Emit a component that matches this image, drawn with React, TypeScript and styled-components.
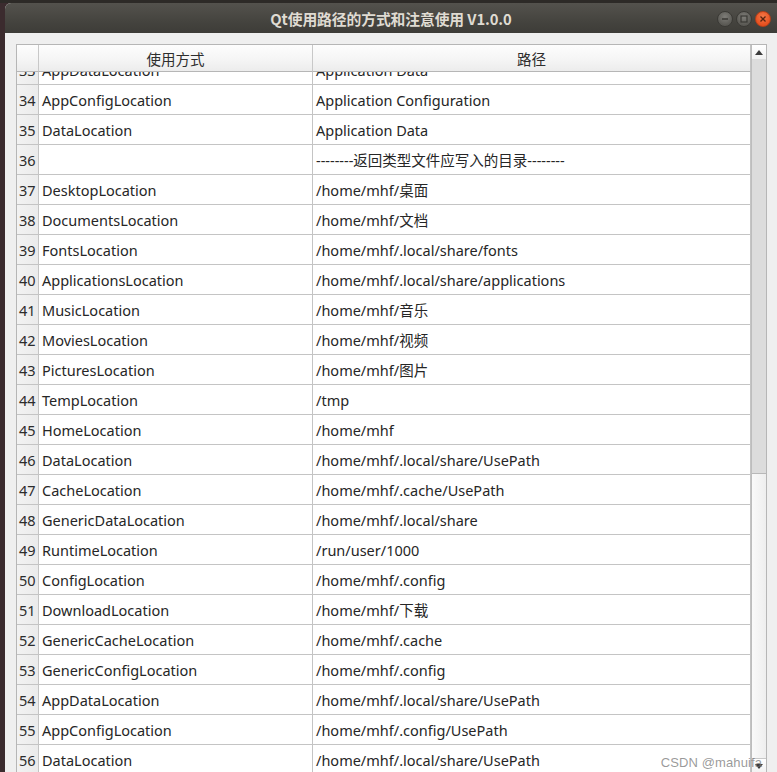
import React from 'react'
import styled, { createGlobalStyle } from 'styled-components'

const GlobalStyle = createGlobalStyle`
  html, body {
    margin: 0;
    padding: 0;
    background: #3b2b2e;
    overflow: hidden;
  }
  body {
    font-family: 'Noto Sans', 'Noto Sans CJK SC', sans-serif;
  }
`

const Desktop = styled.div`
  height: 772px;
  padding: 3px 0 0 5px;
  box-sizing: border-box;
  background: linear-gradient(#2d2a27 0, #2d2a27 3px, #3b2b2e 3px);
`

const Window = styled.div`
  height: 772px;
  background: #efefef;
  border-radius: 6px 0 0 0;
  overflow: hidden;
  display: flex;
  flex-direction: column;
`

const TitleBar = styled.div`
  height: 30px;
  flex: none;
  display: grid;
  grid-template-columns: 1fr auto 1fr;
  align-items: center;
  background: linear-gradient(#54524d, #45443f 60%, #3d3c38);
`

const Title = styled.div`
  grid-column: 2;
  color: #dfdbd2;
  font-family: 'Noto Sans CJK SC', 'Noto Sans', sans-serif;
  font-weight: 700;
  font-size: 14.8px;
  letter-spacing: -0.1px;
  padding-top: 1px;
`

const Controls = styled.div`
  grid-column: 3;
  justify-self: end;
  display: flex;
  gap: 3px;
  padding-right: 6px;
  padding-top: 2px;
`

const WinButton = styled.span<{ $close?: boolean }>`
  width: 16px;
  height: 16px;
  border-radius: 50%;
  display: flex;
  align-items: center;
  justify-content: center;
  box-sizing: border-box;
  border: 1px solid ${p => (p.$close ? '#b7401a' : '#3a3935')};
  background: ${p =>
    p.$close
      ? 'radial-gradient(circle at 50% 35%, #f47a4a, #e6501f 70%)'
      : 'radial-gradient(circle at 50% 35%, #7e7d78, #5a5954 70%)'};
`

const Body = styled.div`
  flex: 1;
  padding: 11px 10px 0 11px;
  display: flex;
  flex-direction: column;
  min-height: 0;
`

const Frame = styled.div`
  position: relative;
  height: 730px;
  flex: none;
  border: 1px solid #b6b6b6;
  display: flex;
  background: #ffffff;
  box-sizing: border-box;
`

const Viewport = styled.div`
  flex: 1;
  display: flex;
  flex-direction: column;
  min-width: 0;
`

const cols = '22px 274px 1fr'

const HeaderRow = styled.div`
  display: grid;
  grid-template-columns: ${cols};
  height: 27px;
  flex: none;
  position: relative;
  z-index: 1;
`

const HeaderCell = styled.div<{ $last?: boolean }>`
  background: linear-gradient(#fdfdfd, #f6f6f6 50%, #ececec);
  border-right: 1px solid ${p => (p.$last ? '#c3c3c3' : '#c8c8c8')};
  border-bottom: 1px solid #b6b6b6;
  display: flex;
  align-items: center;
  justify-content: center;
  font-family: 'Noto Sans CJK SC', 'Noto Sans', sans-serif;
  font-size: 14.5px;
  color: #2e2e2e;
  padding-top: 1px;
  box-sizing: border-box;
`

const Rows = styled.div`
  flex: 1;
  overflow: hidden;
  min-height: 0;
`

const RowList = styled.div`
  margin-top: -17px;
`

const Row = styled.div`
  display: grid;
  grid-template-columns: ${cols};
  height: 30px;
`

const NumCell = styled.div`
  background: linear-gradient(90deg, #f2f2f2, #ebebeb);
  border-right: 1px solid #c4c4c4;
  border-bottom: 1px solid #c4c4c4;
  box-sizing: border-box;
  padding-left: 2px;
  display: flex;
  align-items: center;
  font-size: 14.5px;
  color: #2c2c2c;
  overflow: hidden;
`

const Cell = styled.div`
  border-right: 1px solid #c4c4c4;
  border-bottom: 1px solid #c4c4c4;
  box-sizing: border-box;
  padding-left: 3px;
  display: flex;
  align-items: center;
  font-size: 14.5px;
  color: #262626;
  white-space: nowrap;
  overflow: hidden;
`

const ScrollBar = styled.div`
  width: 15px;
  flex: none;
  display: flex;
  flex-direction: column;
  border-left: 1px solid #bdbdbd;
  box-sizing: border-box;
  background: #dedede;
`

const ArrowButton = styled.div`
  height: 14px;
  flex: none;
  display: flex;
  align-items: center;
  justify-content: center;
  background: linear-gradient(#ffffff, #f1f1f1);
`

const Track = styled.div`
  flex: 1;
  background: #dcdcdc;
`

const Handle = styled.div`
  height: 286px;
  flex: none;
  background: linear-gradient(90deg, #fafafa, #eeeeee);
  border-top: 1px solid #b8b8b8;
  border-bottom: 1px solid #c8c8c8;
  box-sizing: border-box;
`

const Watermark = styled.div`
  position: absolute;
  right: 4px;
  bottom: 3px;
  font-family: 'Liberation Sans', Arial, sans-serif;
  font-size: 13px;
  color: rgba(120, 120, 120, 0.75);
  letter-spacing: 0.1px;
`

const rows: [number, string, string][] = [
  [33, 'AppDataLocation', 'Application Data'],
  [34, 'AppConfigLocation', 'Application Configuration'],
  [35, 'DataLocation', 'Application Data'],
  [36, '', '--------返回类型文件应写入的目录--------'],
  [37, 'DesktopLocation', '/home/mhf/桌面'],
  [38, 'DocumentsLocation', '/home/mhf/文档'],
  [39, 'FontsLocation', '/home/mhf/.local/share/fonts'],
  [40, 'ApplicationsLocation', '/home/mhf/.local/share/applications'],
  [41, 'MusicLocation', '/home/mhf/音乐'],
  [42, 'MoviesLocation', '/home/mhf/视频'],
  [43, 'PicturesLocation', '/home/mhf/图片'],
  [44, 'TempLocation', '/tmp'],
  [45, 'HomeLocation', '/home/mhf'],
  [46, 'DataLocation', '/home/mhf/.local/share/UsePath'],
  [47, 'CacheLocation', '/home/mhf/.cache/UsePath'],
  [48, 'GenericDataLocation', '/home/mhf/.local/share'],
  [49, 'RuntimeLocation', '/run/user/1000'],
  [50, 'ConfigLocation', '/home/mhf/.config'],
  [51, 'DownloadLocation', '/home/mhf/下载'],
  [52, 'GenericCacheLocation', '/home/mhf/.cache'],
  [53, 'GenericConfigLocation', '/home/mhf/.config'],
  [54, 'AppDataLocation', '/home/mhf/.local/share/UsePath'],
  [55, 'AppConfigLocation', '/home/mhf/.config/UsePath'],
  [56, 'DataLocation', '/home/mhf/.local/share/UsePath'],
]

const App: React.FC = () => {
  return (
    <Desktop>
      <GlobalStyle />
      <Window>
        <TitleBar>
          <Title>Qt使用路径的方式和注意使用 V1.0.0</Title>
          <Controls>
            <WinButton>
              <svg width="8" height="8" viewBox="0 0 8 8">
                <path d="M1 4h6" stroke="#3a3935" strokeWidth="1.4" />
              </svg>
            </WinButton>
            <WinButton>
              <svg width="8" height="8" viewBox="0 0 8 8">
                <rect x="1" y="1" width="6" height="6" fill="none" stroke="#3a3935" strokeWidth="1.2" />
              </svg>
            </WinButton>
            <WinButton $close>
              <svg width="8" height="8" viewBox="0 0 8 8">
                <path d="M1.5 1.5l5 5M6.5 1.5l-5 5" stroke="#5a2410" strokeWidth="1.3" />
              </svg>
            </WinButton>
          </Controls>
        </TitleBar>
        <Body>
          <Frame>
            <Viewport>
              <HeaderRow>
                <HeaderCell />
                <HeaderCell>使用方式</HeaderCell>
                <HeaderCell $last>路径</HeaderCell>
              </HeaderRow>
              <Rows>
                <RowList>
                  {rows.map(([n, name, path]) => (
                    <Row key={n}>
                      <NumCell>{n}</NumCell>
                      <Cell>{name}</Cell>
                      <Cell>{path}</Cell>
                    </Row>
                  ))}
                </RowList>
              </Rows>
            </Viewport>
            <ScrollBar>
              <ArrowButton>
                <svg width="8" height="5" viewBox="0 0 8 5">
                  <path d="M0 5L4 0L8 5Z" fill="#3c3c3c" />
                </svg>
              </ArrowButton>
              <Track />
              <Handle />
              <ArrowButton>
                <svg width="8" height="5" viewBox="0 0 8 5">
                  <path d="M0 0L8 0L4 5Z" fill="#3c3c3c" />
                </svg>
              </ArrowButton>
            </ScrollBar>
            <Watermark>CSDN @mahuifa</Watermark>
          </Frame>
        </Body>
      </Window>
    </Desktop>
  )
}

export default App
